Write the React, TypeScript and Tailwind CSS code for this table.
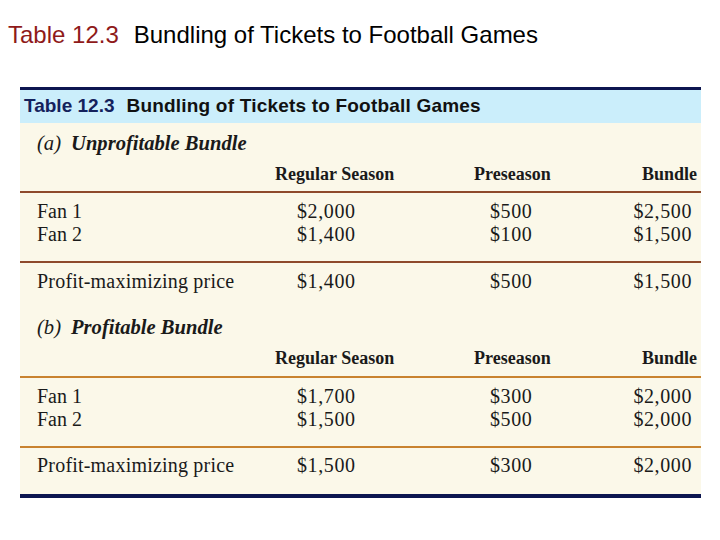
import React from "react";

const serif = { fontFamily: '"Liberation Serif", "Times New Roman", serif' };

type Row = { label: string; a: string; b: string; c: string };

function Section({
  tag,
  title,
  fans,
  profit,
  lineColor,
  first,
}: {
  tag: string;
  title: string;
  fans: Row[];
  profit: Row;
  lineColor: string;
  first: boolean;
}) {
  return (
    <div>
      <div
        className={`flex items-center pl-[17px] text-[20.6px] text-[#1a1a1a] ${first ? "h-[40px]" : "h-[34px] mt-[11px]"}`}
        style={serif}
      >
        <span className="italic">{tag}</span>
        <span className="italic font-bold ml-[10px]">{title}</span>
      </div>
      <div
        className={`flex items-center font-bold text-[18px] text-[#1a1a1a] ${first ? "h-[22px]" : "h-[28px]"}`}
        style={serif}
      >
        <div className="w-[235px]" />
        <div className="w-[160px] pl-[20px]">Regular Season</div>
        <div className="w-[185px] pl-[59px]">Preseason</div>
        <div className="w-[101px] pr-[4px] text-right">Bundle</div>
      </div>
      <div className={first ? "h-[6px]" : "h-[4px]"} />
      <div className="h-[2px]" style={{ backgroundColor: lineColor }} />
      <div className="h-[6px]" />
      {fans.map((r) => (
        <div key={r.label} className="flex items-center h-[23px] text-[20px] text-[#1a1a1a]" style={serif}>
          <div className="w-[235px] pl-[17px]">{r.label}</div>
          <div className="w-[160px] pl-[42px] tracking-[0.6px]">{r.a}</div>
          <div className="w-[185px] pl-[75px] tracking-[0.6px]">{r.b}</div>
          <div className="w-[101px] pr-[9px] text-right tracking-[0.6px]">{r.c}</div>
        </div>
      ))}
      <div className="h-[16px]" />
      <div className="h-[2px]" style={{ backgroundColor: lineColor }} />
      <div
        className={`flex items-center text-[20px] text-[#1a1a1a] ${first ? "h-[36px]" : "h-[34px]"}`}
        style={serif}
      >
        <div className="w-[235px] pl-[17px] tracking-[0.2px]">{profit.label}</div>
        <div className="w-[160px] pl-[42px] tracking-[0.6px]">{profit.a}</div>
        <div className="w-[185px] pl-[75px] tracking-[0.6px]">{profit.b}</div>
        <div className="w-[101px] pr-[9px] text-right tracking-[0.6px]">{profit.c}</div>
      </div>
    </div>
  );
}

export default function App() {
  return (
    <div className="w-[720px] h-[540px] bg-white relative overflow-hidden">
      <div
        className="pt-[21px] pl-[8px] text-[24px] leading-[28px] text-black"
        style={{ fontFamily: '"Liberation Sans", Arial, sans-serif' }}
      >
        <span className="text-[#8f1a1a]">Table 12.3</span>
        <span className="ml-[15px]">Bundling of Tickets to Football Games</span>
      </div>
      <div className="ml-[20px] w-[681px] mt-[38px]">
        <div className="h-[3px] bg-[#0d1650]" />
        <div
          className="h-[33px] bg-[#cbeefb] flex items-center pl-[4px] font-bold text-[19px]"
          style={{ fontFamily: '"Liberation Sans", Arial, sans-serif' }}
        >
          <span className="text-[#14215c]">Table 12.3</span>
          <span className="ml-[12px] text-[#111] tracking-[0.2px]">Bundling of Tickets to Football Games</span>
        </div>
        <div className="bg-[#fbf8e9]">
          <Section
            first
            tag="(a)"
            title="Unprofitable Bundle"
            lineColor="#8e4a2c"
            fans={[
              { label: "Fan 1", a: "$2,000", b: "$500", c: "$2,500" },
              { label: "Fan 2", a: "$1,400", b: "$100", c: "$1,500" },
            ]}
            profit={{ label: "Profit-maximizing price", a: "$1,400", b: "$500", c: "$1,500" }}
          />
          <Section
            first={false}
            tag="(b)"
            title="Profitable Bundle"
            lineColor="#c9832f"
            fans={[
              { label: "Fan 1", a: "$1,700", b: "$300", c: "$2,000" },
              { label: "Fan 2", a: "$1,500", b: "$500", c: "$2,000" },
            ]}
            profit={{ label: "Profit-maximizing price", a: "$1,500", b: "$300", c: "$2,000" }}
          />
          <div className="h-[12px]" />
        </div>
        <div className="h-[4px] bg-[#0d1650]" />
      </div>
    </div>
  );
}
